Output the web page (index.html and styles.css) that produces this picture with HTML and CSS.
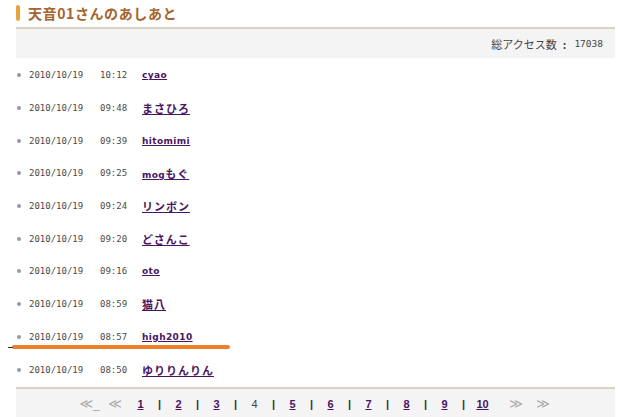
FILE: index.html
```html
<!DOCTYPE html>
<html lang="ja">
<head>
    <meta charset="UTF-8">
    <title>天音01さんのあしあと</title>
    <link rel="stylesheet" href="styles.css">
</head>
<body>
    <div class="container">
        <h1 class="title">天音01さんのあしあと</h1>

        <div class="stats">総アクセス数<span class="colon">:</span><span class="count">17038</span></div>

        <ul class="visits">
            <li><span class="date">2010/10/19</span><span class="time">10:12</span><a class="name latin" href="#">cyao</a></li>
            <li><span class="date">2010/10/19</span><span class="time">09:48</span><a class="name" href="#">まさひろ</a></li>
            <li><span class="date">2010/10/19</span><span class="time">09:39</span><a class="name latin" href="#">hitomimi</a></li>
            <li><span class="date">2010/10/19</span><span class="time">09:25</span><a class="name" href="#"><span class="latin">mog</span>もぐ</a></li>
            <li><span class="date">2010/10/19</span><span class="time">09:24</span><a class="name" href="#">リンボン</a></li>
            <li><span class="date">2010/10/19</span><span class="time">09:20</span><a class="name" href="#">どさんこ</a></li>
            <li><span class="date">2010/10/19</span><span class="time">09:16</span><a class="name latin" href="#">oto</a></li>
            <li><span class="date">2010/10/19</span><span class="time">08:59</span><a class="name" href="#">猫八</a></li>
            <li class="marked"><span class="date">2010/10/19</span><span class="time">08:57</span><a class="name latin" href="#">high2010</a><span class="marker"></span></li>
            <li><span class="date">2010/10/19</span><span class="time">08:50</span><a class="name" href="#">ゆりりんりん</a></li>
        </ul>

        <div class="pager">
            <span class="nav first">≪_</span>
            <span class="nav prev">≪</span>
            <a class="page" href="#">1</a><span class="sep">|</span>
            <a class="page" href="#">2</a><span class="sep">|</span>
            <a class="page" href="#">3</a><span class="sep">|</span>
            <span class="page current">4</span><span class="sep">|</span>
            <a class="page" href="#">5</a><span class="sep">|</span>
            <a class="page" href="#">6</a><span class="sep">|</span>
            <a class="page" href="#">7</a><span class="sep">|</span>
            <a class="page" href="#">8</a><span class="sep">|</span>
            <a class="page" href="#">9</a><span class="sep">|</span>
            <a class="page" href="#">10</a>
            <span class="nav next">≫</span>
            <span class="nav last">≫</span>
        </div>
    </div>
</body>
</html>
```

FILE: styles.css
```css
* {
    margin: 0;
    padding: 0;
    box-sizing: border-box;
}

body {
    background: #fff;
    font-family: "Noto Sans CJK JP", sans-serif;
    overflow: hidden;
}

.container {
    width: 599px;
    margin-left: 16px;
}

.title {
    height: 29px;
    padding-bottom: 2px;
    display: flex;
    align-items: center;
    gap: 8px;
    font-size: 14px;
    font-weight: bold;
    letter-spacing: 0.6px;
    color: #a4662e;
    border-bottom: 2px solid #d8d2c4;
}

.title::before {
    content: '';
    width: 4px;
    height: 16px;
    border-radius: 2px;
    background: #e8a33e;
}

.stats {
    height: 29px;
    display: flex;
    align-items: center;
    justify-content: flex-end;
    padding-right: 12px;
    background: #f4f4f4;
    font-size: 11px;
    color: #444;
}

.stats .colon {
    margin: 0 8px 0 6px;
    font-weight: bold;
}

.stats .count {
    font-family: "DejaVu Sans Mono", monospace;
    font-size: 9.5px;
}

.visits {
    list-style: none;
    padding: 1px 0 1px;
}

.visits li {
    height: 32.7px;
    display: flex;
    align-items: center;
    position: relative;
}

.visits li::before {
    content: '';
    width: 4px;
    height: 4px;
    border-radius: 50%;
    background: #9a9a9a;
    margin: 0 8px 0 1px;
}

.date, .time {
    font-family: "DejaVu Sans Mono", monospace;
    font-size: 9px;
    color: #4a4a4a;
}

.date {
    width: 71px;
}

.time {
    width: 42px;
}

.name {
    font-family: "DejaVu Sans", "Noto Sans CJK JP", sans-serif;
    font-size: 11px;
    font-weight: bold;
    letter-spacing: 1px;
    color: #4a1560;
    text-decoration: underline;
}

.name.latin, .name .latin {
    font-size: 9px;
    letter-spacing: 0.4px;
}

.marker {
    position: absolute;
    left: -4px;
    top: 24px;
    width: 218px;
    height: 4px;
    border-radius: 2px;
    background: #f07f2a;
}

.marker::before {
    content: '';
    position: absolute;
    left: -4px;
    top: 2px;
    width: 5px;
    height: 1px;
    background: #333;
}

.pager {
    height: 30px;
    display: flex;
    align-items: center;
    justify-content: center;
    padding: 2px 5px 0 0;
    border-top: 2px solid #d8d2c4;
    background: #f4f4f4;
    font-family: "Liberation Sans", sans-serif;
    font-size: 11px;
}

.pager .page, .pager .sep {
    width: 19px;
    text-align: center;
}

.pager a.page {
    font-weight: bold;
    color: #4a1560;
}

.pager .current {
    color: #444;
}

.pager .sep {
    font-weight: bold;
    color: #333;
}

.nav {
    font-family: "DejaVu Sans", sans-serif;
    font-size: 13px;
    color: #aaa;
    text-align: center;
}

.nav.first {
    width: 33px;
}

.nav.prev {
    width: 18px;
    margin-right: 7px;
}

.nav.next {
    width: 20px;
    margin-left: 14px;
}

.nav.last {
    width: 20px;
    margin-left: 7px;
}
```
